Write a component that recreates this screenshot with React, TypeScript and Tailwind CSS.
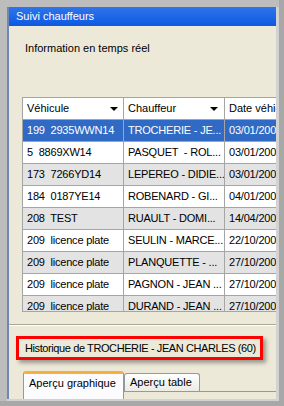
const rows = [
  ["199  2935WWN14", "TROCHERIE - JE...", "03/01/200"],
  ["5  8869XW14", "PASQUET  - ROL...", "03/01/200"],
  ["173  7266YD14", "LEPEREO - DIDIE...", "03/01/200"],
  ["184  0187YE14", "ROBENARD - GI...", "04/01/200"],
  ["208  TEST", "RUAULT - DOMI...", "14/04/200"],
  ["209  licence plate", "SEULIN - MARCE...", "22/10/200"],
  ["209  licence plate", "PLANQUETTE - ...", "27/10/200"],
  ["209  licence plate", "PAGNON - JEAN ...", "27/10/200"],
  ["209  licence plate", "DURAND - JEAN ...", "27/10/200"],
];

function SortArrow() {
  return (
    <svg width="8" height="4" viewBox="0 0 8 4" className="shrink-0">
      <path d="M0 0h8L4 4z" fill="#000" />
    </svg>
  );
}

export default function App() {
  return (
    <div className="w-[284px] h-[406px] flex bg-[#bdbdbd] pt-[7px] pl-[7px] border-r-[5px] border-b-[5px] border-[#a8a8a8] overflow-hidden font-['Liberation_Sans',Arial,sans-serif] text-[11px] text-black">
      <div className="flex flex-1 min-w-0 border-r-[3px] border-b-[2px] border-[#d2d2d2]">
        <div className="flex flex-col flex-1 min-w-0 bg-[#ece9d8] border-l-2 border-[#7086b4] overflow-hidden">
          {/* title */}
          <div className="h-[19px] shrink-0 bg-gradient-to-b from-[#2f74ea] to-[#0b58e2] pl-[7px] leading-[19px] text-white">
            Suivi chauffeurs
          </div>

          <div className="mt-[16px] pl-[16px] leading-[13px]">Information en temps réel</div>

          {/* grid */}
          <div className="mt-[42px] ml-[13px] h-[215px] shrink-0 border-l border-t border-b border-[#a5a5a5] overflow-hidden">
            <div className="flex w-max h-[22px] bg-white">
              <div className="w-[101px] flex items-center justify-between pl-[4px] pr-[5px] border-r border-b border-[#a5a5a5]">
                <span>Véhicule</span>
                <SortArrow />
              </div>
              <div className="w-[101px] flex items-center justify-between pl-[4px] pr-[6px] border-r border-b border-[#a5a5a5]">
                <span>Chauffeur</span>
                <SortArrow />
              </div>
              <div className="w-[80px] flex items-center pl-[4px] border-r border-b border-[#a5a5a5] whitespace-nowrap">
                Date véhicule
              </div>
            </div>
            {rows.map((r, i) => {
              const bg =
                i === 0 ? "bg-[#316ac5] text-white" : i % 2 === 1 ? "bg-white" : "bg-[#e3e3e3]";
              return (
                <div key={i} className={`flex w-max h-[22px] ${bg}`}>
                  {r.map((c, j) => (
                    <div
                      key={j}
                      className={`${j === 2 ? "w-[80px]" : "w-[101px]"} pl-[4px] leading-[21px] whitespace-pre overflow-hidden tracking-[-0.2px] border-r border-b border-[#a5a5a5]`}
                    >
                      {c}
                    </div>
                  ))}
                </div>
              );
            })}
          </div>

          {/* splitter */}
          <div className="mt-[12px] h-px shrink-0 bg-[#aca899]" />
          <div className="h-px shrink-0 bg-white" />

          {/* history label */}
          <div className="mt-[10px] ml-[7px] w-[247px] h-[24px] shrink-0 border-[3px] border-[#ff0000] shadow-[3px_3px_4px_rgba(0,0,0,0.35)] pl-[6px] leading-[18px] whitespace-nowrap tracking-[-0.4px]">
            Historique de TROCHERIE - JEAN CHARLES (60)
          </div>

          {/* tabs */}
          <div className="mt-[11px] ml-[14px] flex flex-1 min-h-0">
            <div className="w-[101px] shrink-0 bg-[#fcfcfe] border-l border-r border-[#919b9c] border-t-[3px] border-t-[#f7b03c] rounded-t-[3px] pl-[5px] leading-[18px]">
              Aperçu graphique
            </div>
            <div className="flex flex-col flex-1 pt-[2px]">
              <div className="w-[76px] h-[18px] shrink-0 bg-gradient-to-b from-white to-[#ecebe6] border-l border-r border-t border-[#919b9c] rounded-t-[3px] pl-[5px] leading-[17px]">
                Aperçu table
              </div>
              <div className="h-px shrink-0 bg-[#919b9c]" />
            </div>
          </div>
        </div>
      </div>
    </div>
  );
}
